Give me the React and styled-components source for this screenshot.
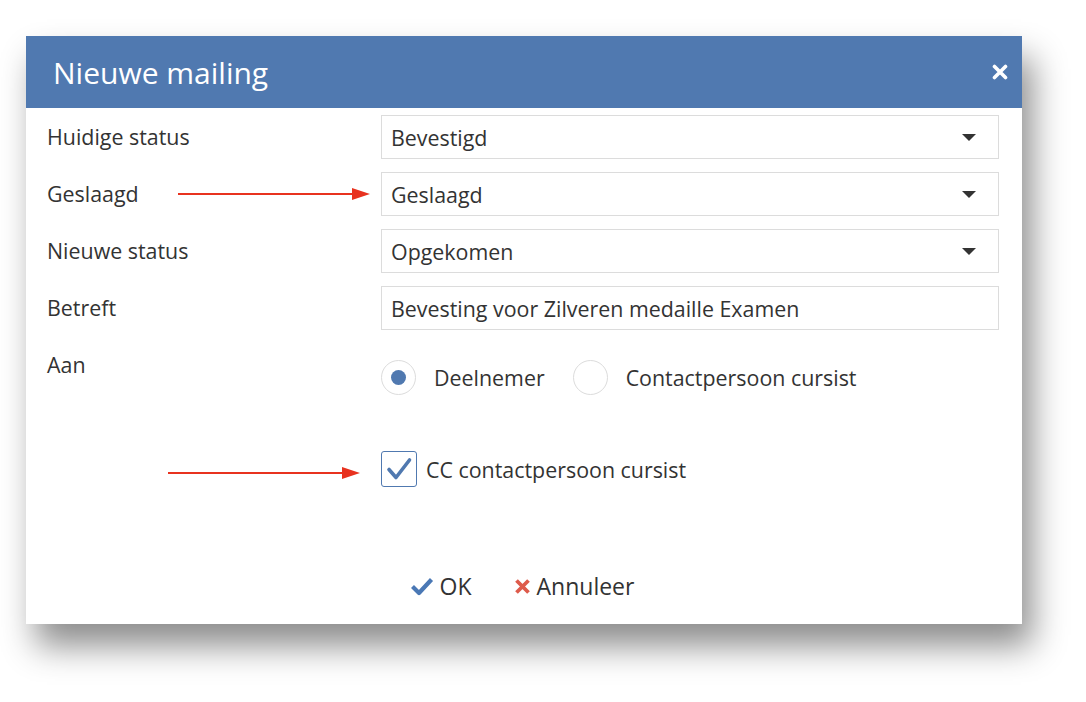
import React from 'react'
import styled, { createGlobalStyle } from 'styled-components'

const GlobalStyle = createGlobalStyle`
  body {
    margin: 0;
    background: #ffffff;
    font-family: "Open Sans", "Liberation Sans", sans-serif;
    color: #333333;
  }
`;

const Page = styled.div`
  min-height: 100vh;
  box-sizing: border-box;
  padding: 36px 0 0 26px;
`;

const Dialog = styled.div`
  width: 996px;
  height: 588px;
  background: #ffffff;
  box-shadow: 10px 22px 32px rgba(0, 0, 0, 0.45);
  display: flex;
  flex-direction: column;
`;

const Header = styled.div`
  height: 72px;
  background: #5079b0;
  display: flex;
  align-items: center;
  justify-content: space-between;
  padding: 0 14px 0 27px;
  flex-shrink: 0;
`;

const Title = styled.h1`
  margin: 0;
  font-size: 30px;
  font-weight: 500;
  color: #ffffff;
`;

const Close = styled.button`
  border: none;
  background: none;
  padding: 0;
  width: 16px;
  height: 16px;
  cursor: pointer;
  display: flex;
`;

const Body = styled.div`
  flex: 1;
  padding: 7px 23px 0 21px;
  display: flex;
  flex-direction: column;
`;

const Row = styled.div`
  display: grid;
  grid-template-columns: 334px 1fr;
  margin-bottom: ${p => (p.$gap === undefined ? 13 : p.$gap)}px;
`;

const Label = styled.div`
  position: relative;
  font-size: 21.4px;
  line-height: 44px;
`;

const Arrow = styled.svg`
  position: absolute;
  top: 14px;
  left: ${p => p.$left}px;
`;

const Field = styled.div`
  height: 44px;
  box-sizing: border-box;
  border: 1px solid #dcdcdc;
  display: flex;
  align-items: center;
  justify-content: space-between;
  padding: 0 22px 0 9px;
  font-size: 21.4px;
`;

const Caret = styled.span`
  width: 0;
  height: 0;
  border-left: 7px solid transparent;
  border-right: 7px solid transparent;
  border-top: 7px solid #333333;
`;

const RadioGroup = styled.div`
  display: flex;
  align-items: center;
  padding-top: 17px;
`;

const RadioCircle = styled.span`
  width: 35px;
  height: 35px;
  box-sizing: border-box;
  border: 1px solid #dcdcdc;
  border-radius: 50%;
  display: flex;
  align-items: center;
  justify-content: center;
  margin-right: 18px;

  &::after {
    content: '';
    width: 15px;
    height: 15px;
    border-radius: 50%;
    background: ${p => (p.$checked ? '#5079b0' : 'transparent')};
  }
`;

const RadioText = styled.span`
  font-size: 21.4px;
  margin-right: 28px;
`;

const CheckLine = styled.div`
  display: flex;
  align-items: center;
  gap: 9px;
  font-size: 21.4px;
`;

const CheckBox = styled.span`
  width: 36px;
  height: 36px;
  box-sizing: border-box;
  border: 1.5px solid #5079b0;
  border-radius: 3px;
  display: flex;
  align-items: center;
  justify-content: center;
`;

const Footer = styled.div`
  margin-top: 83px;
  display: flex;
  justify-content: center;
  gap: 42px;
  padding-right: 2px;
`;

const Action = styled.button`
  border: none;
  background: none;
  padding: 0;
  font-family: inherit;
  font-size: 23px;
  color: #333333;
  display: flex;
  align-items: center;
  gap: ${p => p.$gap}px;
  cursor: pointer;
`;

function RedArrow({ left, width }) {
  return (
    <Arrow $left={left} width={width} height="16" viewBox={`0 0 ${width} 16`}>
      <line x1="0" y1="8" x2={width - 16} y2="8" stroke="#e8321f" strokeWidth="2" />
      <polygon points={`${width - 18},2 ${width},8 ${width - 18},14`} fill="#e8321f" />
    </Arrow>
  );
}

function Select({ value }) {
  return (
    <Field>
      {value}
      <Caret />
    </Field>
  );
}

function App() {
  return (
    <Page>
      <GlobalStyle />
      <Dialog>
        <Header>
          <Title>Nieuwe mailing</Title>
          <Close aria-label="Sluiten">
            <svg width="16" height="16" viewBox="0 0 16 16">
              <path d="M2.5 2.5 L13.5 13.5 M13.5 2.5 L2.5 13.5" stroke="#fff" strokeWidth="3.6" strokeLinecap="round" />
            </svg>
          </Close>
        </Header>
        <Body>
          <Row>
            <Label>Huidige status</Label>
            <Select value="Bevestigd" />
          </Row>
          <Row>
            <Label>
              Geslaagd
              <RedArrow left={131} width={192} />
            </Label>
            <Select value="Geslaagd" />
          </Row>
          <Row>
            <Label>Nieuwe status</Label>
            <Select value="Opgekomen" />
          </Row>
          <Row>
            <Label>Betreft</Label>
            <Field>Bevesting voor Zilveren medaille Examen</Field>
          </Row>
          <Row $gap={56}>
            <Label>Aan</Label>
            <RadioGroup>
              <RadioCircle $checked />
              <RadioText>Deelnemer</RadioText>
              <RadioCircle />
              <RadioText>Contactpersoon cursist</RadioText>
            </RadioGroup>
          </Row>
          <Row $gap={0}>
            <Label>
              <RedArrow left={121} width={192} />
            </Label>
            <CheckLine>
              <CheckBox>
                <svg width="28" height="26" viewBox="0 0 28 26">
                  <path d="M4 13.5 L11 21.5 L24.5 4" fill="none" stroke="#5079b0" strokeWidth="3.6" strokeLinecap="round" strokeLinejoin="round" />
                </svg>
              </CheckBox>
              CC contactpersoon cursist
            </CheckLine>
          </Row>
          <Footer>
            <Action $gap={6}>
              <svg width="24" height="19" viewBox="0 0 24 19">
                <path d="M2.5 9.5 L9 16 L21.5 2.5" fill="none" stroke="#4a78b5" strokeWidth="4.2" strokeLinejoin="round" />
              </svg>
              OK
            </Action>
            <Action $gap={6}>
              <svg width="17" height="17" viewBox="0 0 17 17">
                <path d="M2.5 2.5 L14.5 14.5 M14.5 2.5 L2.5 14.5" stroke="#de5b4b" strokeWidth="3.8" />
              </svg>
              Annuleer
            </Action>
          </Footer>
        </Body>
      </Dialog>
    </Page>
  );
}

export default App
